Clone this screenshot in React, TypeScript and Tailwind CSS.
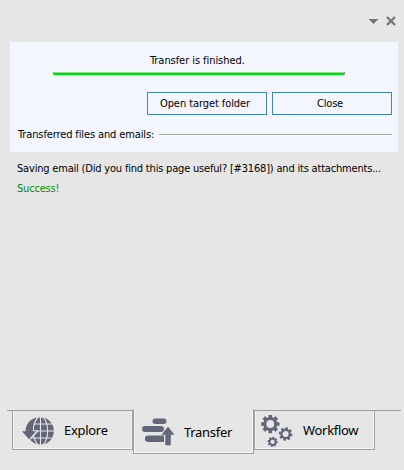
import React from "react";

const INK = "#64667a";

function GlobeIcon() {
  return (
    <svg width="32" height="28" viewBox="0 0 32 28" className="block shrink-0">
      <ellipse cx="18.5" cy="14" rx="13.3" ry="13.8" fill={INK} />
      <g fill="none" stroke="#e6e6e6" strokeWidth="1.1">
        <path d="M18.5 0V28M4 14H32M8 7H30M8 21H30" />
        <ellipse cx="18.5" cy="14" rx="7.2" ry="14.5" />
      </g>
      <path d="M16 -0.5C9 1 3 5 2.6 13.5H-0.5L5.5 23.5H7.5L16 14.8V13.5H12C11.8 8 13 4 17 0Z" fill="#e6e6e6" />
      <path d="M15 0.5C8 2 3.8 7 3.4 14.3H0L7 22.3L14.2 14.3H10.9C10.8 8.5 12 4 15 0.5Z" fill={INK} />
    </svg>
  );
}

function TransferIcon() {
  return (
    <svg width="32" height="28" viewBox="0 0 32 28" className="block shrink-0">
      <g fill={INK}>
        <rect x="10.5" y="0.5" width="14" height="5.5" rx="2.7" />
        <rect x="0" y="8" width="22" height="6" rx="3" />
        <path d="M6.2 17.5H22V24H6.2A3.2 3.2 0 0 1 6.2 17.5Z" />
      </g>
      <path d="M26 9L32 16.5H28.5V27H23.5V16.5H20Z" fill={INK} stroke={INK} strokeWidth="0.6" strokeLinejoin="round" />
      <path d="M22.6 17V25" stroke="#e6e6e6" strokeWidth="1" />
    </svg>
  );
}

function Gear({ x, y, r, hole, turn = 0 }: { x: number; y: number; r: number; hole: number; turn?: number }) {
  const w = r * 0.4;
  return (
    <g transform={`translate(${x} ${y}) rotate(${turn})`} fill={INK}>
      {[0, 45, 90, 135].map((a) => (
        <rect key={a} x={-w / 2} y={-r} width={w} height={r * 2} rx="0.5" transform={`rotate(${a})`} />
      ))}
      <circle r={r * 0.76} />
      <circle r={hole} fill="#e6e6e6" />
    </g>
  );
}

function GearsIcon() {
  return (
    <svg width="32" height="32" viewBox="0 0 32 32" className="block shrink-0">
      <Gear x={9.3} y={9} r={9.2} hole={3.9} />
      <Gear x={24.6} y={19} r={6.8} hole={3} turn={10} />
      <Gear x={11.6} y={26.8} r={5.1} hole={2.1} turn={10} />
    </svg>
  );
}

export default function App() {
  return (
    <div className="flex h-[470px] w-[404px] flex-col overflow-hidden bg-[#e6e6e6] font-['DejaVu_Sans_Condensed','DejaVu_Sans',sans-serif] text-[11px] leading-[14px] text-black">
      <header className="flex h-[42px] items-start justify-end gap-2 pr-[8px] pt-[16px]">
        <svg width="9" height="5" viewBox="0 0 9 5" shapeRendering="crispEdges" className="mt-[3px] block">
          <path d="M0 0H9V1H8V2H7V3H6V4H5V5H4V4H3V3H2V2H1V1H0Z" fill="#777" />
        </svg>
        <svg width="10" height="10" viewBox="0 0 10 10" className="block">
          <path d="M1 1L9 9M9 1L1 9" stroke="#777" strokeWidth="2.4" />
        </svg>
      </header>

      <section className="ml-[10px] flex h-[110px] w-[388px] flex-col bg-[#f3f6ff]">
        <div className="mt-[12px] pl-[140px] tracking-[-0.06px]">Transfer is finished.</div>
        <div className="ml-[43px] mt-[4px] h-[3px] w-[292px] border-x border-[#8b9a8b] bg-linear-to-b from-[#9aee9f] from-0% via-[#00dc16] via-50% to-[#00d813]" />
        <div className="ml-[137px] mt-[17px] flex gap-[5px]">
          <button className="h-[23px] w-[120px] border border-[#4384ba] pr-1 pt-px tracking-[-0.08px]">Open target folder</button>
          <button className="h-[23px] w-[120px] border border-[#4384ba] pr-1 pt-px tracking-[-0.2px]">Close</button>
        </div>
        <div className="mt-[13px] flex items-center pl-[8px] pr-[5px]">
          <span className="w-[141px] whitespace-nowrap tracking-[-0.12px]">Transferred files and emails:</span>
          <i className="-mt-px h-[2px] w-[233px] border-b border-t border-b-white border-t-[#a0a0a0]" />
        </div>
      </section>

      <section className="pl-[17px] pt-[10px]">
        <p className="h-[20px] whitespace-nowrap tracking-[-0.19px]">Saving email (Did you find this page useful? [#3168]) and its attachments...</p>
        <p className="tracking-[-0.2px] text-[#008a0c]">Success!</p>
      </section>

      <nav className="mt-auto flex h-[61px] items-start pl-[7px] font-['Noto_Sans',sans-serif] text-[13px] tracking-[-0.3px]">
        <i className="mt-px h-px w-[5px] bg-[#a0a0a0]" />
        <div className="mt-px flex h-[40px] w-[121px] border border-[#a0a0a0] pl-[9px] pt-[6px] shadow-[inset_-1px_-1px_#f5f5f5,inset_1px_0_#f5f5f5]">
          <GlobeIcon />
          <span className="ml-[10px] mt-[6px]">Explore</span>
        </div>
        <div className="flex h-[45px] w-[121px] border border-t-0 border-[#a0a0a0] pl-[8px] pt-[9px] shadow-[inset_-1px_-1px_#f5f5f5,inset_1px_0_#f5f5f5]">
          <TransferIcon />
          <span className="ml-[10px] mt-[7px]">Transfer</span>
        </div>
        <div className="mt-px flex h-[40px] w-[121px] border border-[#a0a0a0] pl-[6px] pt-[4px] shadow-[inset_-1px_-1px_#f5f5f5,inset_1px_0_#f5f5f5]">
          <GearsIcon />
          <span className="ml-[10px] mt-[8px]">Workflow</span>
        </div>
        <i className="mt-px h-px w-[26px] bg-[#a0a0a0]" />
      </nav>
    </div>
  );
}
